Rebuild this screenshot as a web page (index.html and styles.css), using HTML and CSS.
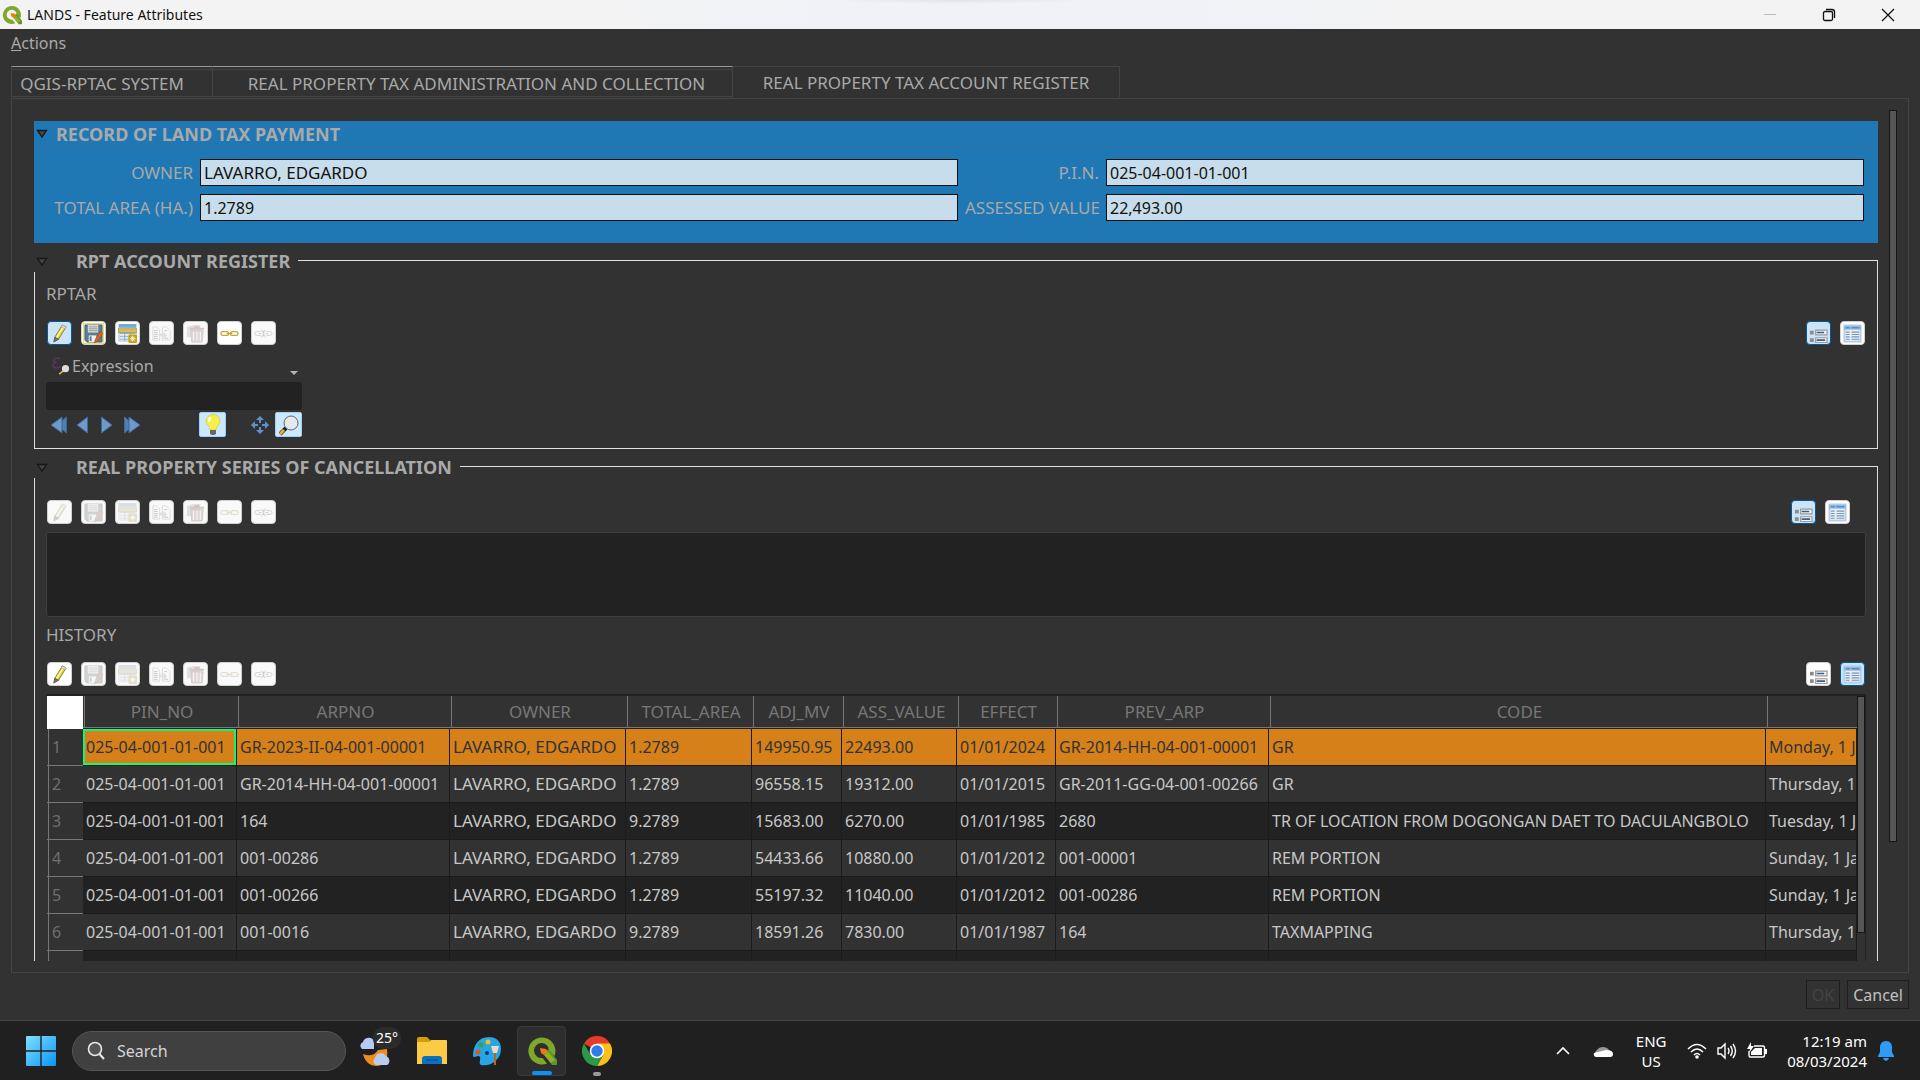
FILE: index.html
```
<!DOCTYPE html>
<html lang="en">
<head>
    <meta charset="UTF-8">
    <meta name="viewport" content="width=device-width, initial-scale=1.0">
    <title>LANDS - Feature Attributes</title>
    <link rel="stylesheet" href="styles.css">
</head>
<body>
    <!-- Icon set -->
    <svg class="sprite" aria-hidden="true">
        <symbol id="i-qgis" viewBox="0 0 30 30">
            <path d="M15 1.500A13.500 13.500 0 1 0 20 27.500L15.500 22A7.500 7.500 0 1 1 22 14.500L27.500 20A13.500 13.500 0 0 0 15 1.500Z" fill="#7fa82b"/>
            <path d="M16 17L22 13L30 24V29H25Z" fill="#589632"/>
            <path d="M13 12L19 13L21 16L17 19L14 17Z" fill="#ee7913"/>
            <path d="M17 19L21 16L28 24L24 27Z" fill="#93b023"/>
        </symbol>
        <symbol id="i-pencil" viewBox="0 0 20 20">
            <path d="M13 1L17 3L9 16L5 14Z" fill="#e0cf48" stroke="#8d8130"/>
            <path d="M14 3L6.500 15" stroke="#fff6a0" stroke-width="1.500"/>
            <path d="M13 1L17 3L16 5L12 3Z" fill="#ddd" stroke="#999" stroke-width=".5"/>
            <path d="M5 14L9 16L4 19Z" fill="#777" stroke="#555"/>
        </symbol>
        <symbol id="i-save" viewBox="0 0 20 20">
            <path d="M1 1H19V19H3L1 17Z" fill="#5a7d95" stroke="#47606f"/>
            <path d="M4 1H15V9H4Z" fill="#d9d9d9"/>
            <path d="M5 3H14M5 5H14M5 7H14" stroke="#999"/>
            <path d="M5 12H13V19H5Z" fill="#f0f0f0"/>
            <path d="M6 13H8V18H6Z" fill="#5a7d95"/>
            <path d="M17 8L20 10L14 18L11 20L12 16Z" fill="#e85f28" stroke="#9d4b16" stroke-width=".7"/>
        </symbol>
        <symbol id="i-add" viewBox="0 0 20 20">
            <path d="M1 0H19V18H1Z" fill="#e4eef8" stroke="#a8c4df"/>
            <path d="M1 0H19V4H1Z" fill="#78a9d4"/>
            <path d="M2 10H18M2 13H18M2 16H18M7 9V18M13 9V18" stroke="#8aaed2"/>
            <path d="M0 5H20V9H0Z" fill="#d8bd57" stroke="#9e862e" stroke-width=".7"/>
            <rect x="11" y="11" width="9" height="9" rx="1" fill="#c9a30c"/>
            <path d="M15.500 12.500V18.500M12.500 15.500H18.500M13.500 13.500L17.500 17.500M17.500 13.500L13.500 17.500" stroke="#fffbe0" stroke-width="1"/>
        </symbol>
        <symbol id="i-copy" viewBox="0 0 20 20">
            <path d="M1 3H5L8 6V17H1ZM11 3H15L19 7V17H11Z" fill="#fff" stroke="#999"/>
            <path d="M2 7H6M2 9H6M2 11H6M2 13H6M2 15H6M13 7H16M13 15H17" stroke="#555"/>
            <path d="M7 10H12V8L16 12L12 16V13H7Z" fill="#a3ae93"/>
        </symbol>
        <symbol id="i-trash" viewBox="0 0 20 20">
            <path d="M1 3L8 1H15V5L11 14H1Z" fill="#c4a3a3"/>
            <path d="M4 5H19M9 3H14" stroke="#a44" stroke-width="2"/>
            <path d="M5 7H18L17 19H6Z" fill="#c67b7b" stroke="#a55"/>
            <path d="M8 8V18M11.500 8V18M15 8V18" stroke="#fff"/>
        </symbol>
        <symbol id="i-link" viewBox="0 0 20 20">
            <g fill="none" stroke="#c7a52b" stroke-width="1.300">
                <rect x="1" y="8" width="8" height="4" rx="2"/>
                <rect x="11" y="8" width="8" height="4" rx="2"/>
                <path d="M7 10H13" stroke-width="1.500"/>
            </g>
        </symbol>
        <symbol id="i-unlink" viewBox="0 0 20 20">
            <path d="M7 8H3A2 2 0 0 0 3 12H7M13 8H17A2 2 0 0 1 17 12H13M5 10H8M12 10H15M8 6L12 14M12 6L8 14M10 7V13" fill="none" stroke="#777"/>
        </symbol>
        <symbol id="i-form" viewBox="0 0 20 20">
            <path d="M1 7H5V11H1ZM1 15H5V19H1Z" fill="#8d8d86"/>
            <path d="M7 6.500H19V11.500H7ZM7 14.500H19V19.500H7Z" fill="#f5f5f5" stroke="#999" stroke-width="1.200"/>
            <path d="M8 9H16M8 17H17" stroke="#365f92" stroke-width="1.700"/>
        </symbol>
        <symbol id="i-table" viewBox="0 0 20 20">
            <path d="M1.500 1.500H18.500V18.500H1.500Z" fill="#eee" stroke="#b7cde6" stroke-width="2"/>
            <path d="M1 2H19V6H1Z" fill="#8fbbe3"/>
            <path d="M3 4H7M9 4H17" stroke="#3b76b4"/>
            <path d="M3 8.500H7M9 8.500H17M3 11H7M9 11H17M3 13.500H7M9 13.500H17M3 16H7M9 16H17" stroke="#6d97c9" stroke-width="1.200"/>
        </symbol>
        <symbol id="i-prev" viewBox="0 0 12 18">
            <path d="M11.500 1V17L1 9Z" fill="#6c9acb" stroke="#3f6897"/>
        </symbol>
        <symbol id="i-first" viewBox="0 0 18 18">
            <path d="M16.500 1V17L7 9Z" fill="#4f7eb3" stroke="#3f6897"/>
            <path d="M12 1V17L1 9Z" fill="#6c9acb" stroke="#3f6897"/>
        </symbol>
    </svg>

    <header class="titlebar">
        <svg class="app-icon"><use href="#i-qgis"/></svg>
        <span class="window-title">LANDS - Feature Attributes</span>
        <div class="window-buttons">
            <button type="button" aria-label="Minimize"><svg viewBox="0 0 14 14"><path d="M1 6.500H13" stroke="#bbb"/></svg></button>
            <button type="button" aria-label="Restore"><svg viewBox="0 0 14 14"><path d="M4 1.500H10Q12.500 1.500 12.500 4V10" fill="none" stroke="#111" stroke-width="1.300"/><rect x="1.500" y="3.500" width="9" height="9" rx="1.500" fill="none" stroke="#111" stroke-width="1.300"/></svg></button>
            <button type="button" aria-label="Close"><svg viewBox="0 0 14 14"><path d="M1 1L13 13M13 1L1 13" stroke="#111" stroke-width="1.300"/></svg></button>
        </div>
    </header>

    <nav class="menubar">
        <button type="button"><u>A</u>ctions</button>
    </nav>

    <div class="tabs" role="tablist">
        <button type="button" role="tab" class="tab tab-first">QGIS-RPTAC SYSTEM</button>
        <button type="button" role="tab" class="tab tab-wide">REAL PROPERTY TAX ADMINISTRATION AND COLLECTION</button>
        <button type="button" role="tab" class="tab active" aria-selected="true">REAL PROPERTY TAX ACCOUNT REGISTER</button>
    </div>

    <main class="pane">
        <div class="content">
            <section class="record">
                <h2><svg class="arrow" viewBox="0 0 12 10"><path d="M1.500 1.500H10.500L6 8Z"/></svg>RECORD OF LAND TAX PAYMENT</h2>
                <form class="record-form">
                    <label for="owner">OWNER</label>
                    <input type="text" id="owner" class="name" value="LAVARRO, EDGARDO">
                    <label for="pin">P.I.N.</label>
                    <input type="text" id="pin" value="025-04-001-01-001">
                    <label for="area">TOTAL AREA (HA.)</label>
                    <input type="text" id="area" value="1.2789">
                    <label for="assessed">ASSESSED VALUE</label>
                    <input type="text" id="assessed" value="22,493.00">
                </form>
            </section>

            <section class="group">
                <div class="group-head">
                    <svg class="arrow" viewBox="0 0 12 10"><path d="M1.500 1.500H10.500L6 8Z"/></svg>
                    <h2>RPT ACCOUNT REGISTER</h2>
                    <span class="group-line"></span>
                </div>
                <div class="group-body">
                    <h3>RPTAR</h3>
                    <div class="toolbar">
                        <button type="button" class="tool checked" aria-label="Toggle editing"><svg><use href="#i-pencil"/></svg></button>
                        <button type="button" class="tool save-on" aria-label="Save edits"><svg><use href="#i-save"/></svg></button>
                        <button type="button" class="tool" aria-label="Add feature"><svg><use href="#i-add"/></svg></button>
                        <button type="button" class="tool" aria-label="Duplicate" disabled><svg><use href="#i-copy"/></svg></button>
                        <button type="button" class="tool" aria-label="Delete" disabled><svg><use href="#i-trash"/></svg></button>
                        <button type="button" class="tool" aria-label="Link"><svg><use href="#i-link"/></svg></button>
                        <button type="button" class="tool" aria-label="Unlink" disabled><svg><use href="#i-unlink"/></svg></button>
                        <span class="spacer"></span>
                        <button type="button" class="tool checked" aria-label="Form view"><svg><use href="#i-form"/></svg></button>
                        <button type="button" class="tool" aria-label="Table view"><svg><use href="#i-table"/></svg></button>
                    </div>
                    <div class="browser">
                        <button type="button" class="expression">
                            <svg class="epsilon" viewBox="0 0 20 20">
                                <path d="M9 2C5 0 1 2 2 4.500C2 6 4 6 5 6C2 6 1 8 1 9.500C2 13 6 13 9 11" fill="none" stroke="#5e3568" stroke-width="1.600"/>
                                <path d="M8 19L13 15" stroke="#d5ad48" stroke-width="2"/>
                                <circle cx="15" cy="13" r="4" fill="#ddd"/>
                            </svg>
                            Expression
                            <svg class="caret" viewBox="0 0 8 4"><path d="M0 0H8L4 4Z" fill="#b5b5b5"/></svg>
                        </button>
                        <input type="text" class="filter" aria-label="Filter">
                        <div class="nav">
                            <button type="button" aria-label="First"><svg class="wide"><use href="#i-first"/></svg></button>
                            <button type="button" aria-label="Previous"><svg><use href="#i-prev"/></svg></button>
                            <button type="button" aria-label="Next"><svg class="flip"><use href="#i-prev"/></svg></button>
                            <button type="button" aria-label="Last"><svg class="wide flip"><use href="#i-first"/></svg></button>
                            <span class="spacer"></span>
                            <button type="button" class="lit" aria-label="Highlight feature">
                                <svg viewBox="0 0 20 22"><path d="M7 16C7 12 3 11 3 7A7 6.500 0 0 1 17 7C17 11 13 12 13 16Z" fill="#f5f04c" stroke="#cfc843" stroke-width=".7"/><path d="M7 3L6 8" stroke="#fff" stroke-width="2"/><path d="M7 16H13V20L11 21H9L7 20Z" fill="#666"/></svg>
                            </button>
                            <button type="button" class="pan" aria-label="Pan to feature">
                                <svg viewBox="0 0 18 18"><path d="M9 0L13 4H10V7H8V4H5ZM9 18L13 14H10V11H8V14H5ZM0 9L4 5V8H7V10H4V13ZM18 9L14 5V8H11V10H14V13Z" fill="#5f92cc"/></svg>
                            </button>
                            <button type="button" class="lit" aria-label="Zoom to feature">
                                <svg viewBox="0 0 20 22"><path d="M7 14L1 20" stroke="#222" stroke-width="4"/><path d="M5 16L1 20" stroke="#e7b63e" stroke-width="3"/><circle cx="12" cy="9" r="7" fill="#e5e9ec" stroke="#666"/></svg>
                            </button>
                        </div>
                    </div>
                </div>
            </section>

            <section class="group group-last">
                <div class="group-head">
                    <svg class="arrow" viewBox="0 0 12 10"><path d="M1.500 1.500H10.500L6 8Z"/></svg>
                    <h2>REAL PROPERTY SERIES OF CANCELLATION</h2>
                    <span class="group-line"></span>
                </div>
                <div class="group-body">
                    <div class="toolbar toolbar-inset">
                        <button type="button" class="tool" aria-label="Toggle editing" disabled><svg><use href="#i-pencil"/></svg></button>
                        <button type="button" class="tool" aria-label="Save edits" disabled><svg><use href="#i-save"/></svg></button>
                        <button type="button" class="tool" aria-label="Add feature" disabled><svg><use href="#i-add"/></svg></button>
                        <button type="button" class="tool" aria-label="Duplicate" disabled><svg><use href="#i-copy"/></svg></button>
                        <button type="button" class="tool" aria-label="Delete" disabled><svg><use href="#i-trash"/></svg></button>
                        <button type="button" class="tool" aria-label="Link" disabled><svg><use href="#i-link"/></svg></button>
                        <button type="button" class="tool" aria-label="Unlink" disabled><svg><use href="#i-unlink"/></svg></button>
                        <span class="spacer"></span>
                        <button type="button" class="tool checked" aria-label="Form view"><svg><use href="#i-form"/></svg></button>
                        <button type="button" class="tool" aria-label="Table view"><svg><use href="#i-table"/></svg></button>
                    </div>
                    <div class="empty-view"></div>
                    <h3>HISTORY</h3>
                    <div class="toolbar">
                        <button type="button" class="tool" aria-label="Toggle editing"><svg><use href="#i-pencil"/></svg></button>
                        <button type="button" class="tool" aria-label="Save edits" disabled><svg><use href="#i-save"/></svg></button>
                        <button type="button" class="tool" aria-label="Add feature" disabled><svg><use href="#i-add"/></svg></button>
                        <button type="button" class="tool" aria-label="Duplicate" disabled><svg><use href="#i-copy"/></svg></button>
                        <button type="button" class="tool" aria-label="Delete" disabled><svg><use href="#i-trash"/></svg></button>
                        <button type="button" class="tool" aria-label="Link" disabled><svg><use href="#i-link"/></svg></button>
                        <button type="button" class="tool" aria-label="Unlink" disabled><svg><use href="#i-unlink"/></svg></button>
                        <span class="spacer"></span>
                        <button type="button" class="tool" aria-label="Form view"><svg><use href="#i-form"/></svg></button>
                        <button type="button" class="tool checked" aria-label="Table view"><svg><use href="#i-table"/></svg></button>
                    </div>
                    <div class="table-view">
                        <div class="table-scrollport">
                            <table>
                                <colgroup>
                                    <col class="c-num"><col class="c-pin"><col class="c-arp"><col class="c-owner"><col class="c-area"><col class="c-mv"><col class="c-ass"><col class="c-effect"><col class="c-arp"><col><col class="c-date">
                                </colgroup>
                                <thead>
                                    <tr><td class="corner"></td><th>PIN_NO</th><th>ARPNO</th><th>OWNER</th><th>TOTAL_AREA</th><th>ADJ_MV</th><th>ASS_VALUE</th><th>EFFECT</th><th>PREV_ARP</th><th>CODE</th><th></th></tr>
                                </thead>
                                <tbody>
                                    <tr class="selected"><th>1</th><td class="current">025-04-001-01-001</td><td>GR-2023-II-04-001-00001</td><td class="name">LAVARRO, EDGARDO</td><td>1.2789</td><td>149950.95</td><td>22493.00</td><td>01/01/2024</td><td>GR-2014-HH-04-001-00001</td><td>GR</td><td>Monday, 1 January</td></tr>
                                    <tr><th>2</th><td>025-04-001-01-001</td><td>GR-2014-HH-04-001-00001</td><td class="name">LAVARRO, EDGARDO</td><td>1.2789</td><td>96558.15</td><td>19312.00</td><td>01/01/2015</td><td>GR-2011-GG-04-001-00266</td><td>GR</td><td>Thursday, 1 January</td></tr>
                                    <tr><th>3</th><td>025-04-001-01-001</td><td>164</td><td class="name">LAVARRO, EDGARDO</td><td>9.2789</td><td>15683.00</td><td>6270.00</td><td>01/01/1985</td><td>2680</td><td>TR OF LOCATION FROM DOGONGAN DAET TO DACULANGBOLO</td><td>Tuesday, 1 January</td></tr>
                                    <tr><th>4</th><td>025-04-001-01-001</td><td>001-00286</td><td class="name">LAVARRO, EDGARDO</td><td>1.2789</td><td>54433.66</td><td>10880.00</td><td>01/01/2012</td><td>001-00001</td><td>REM PORTION</td><td>Sunday, 1 January</td></tr>
                                    <tr><th>5</th><td>025-04-001-01-001</td><td>001-00266</td><td class="name">LAVARRO, EDGARDO</td><td>1.2789</td><td>55197.32</td><td>11040.00</td><td>01/01/2012</td><td>001-00286</td><td>REM PORTION</td><td>Sunday, 1 January</td></tr>
                                    <tr><th>6</th><td>025-04-001-01-001</td><td>001-0016</td><td class="name">LAVARRO, EDGARDO</td><td>9.2789</td><td>18591.26</td><td>7830.00</td><td>01/01/1987</td><td>164</td><td>TAXMAPPING</td><td>Thursday, 1 January</td></tr>
                                    <tr><th></th><td></td><td></td><td></td><td></td><td></td><td></td><td></td><td></td><td></td><td></td></tr>
                                </tbody>
                            </table>
                        </div>
                        <div class="scrollbar table-scroll"><span></span></div>
                    </div>
                </div>
            </section>
        </div>
        <div class="scrollbar page-scroll"><span></span></div>
    </main>

    <div class="dialog-buttons">
        <button type="button" disabled>OK</button>
        <button type="button">Cancel</button>
    </div>

    <footer class="taskbar">
        <button type="button" class="start" aria-label="Start">
            <svg viewBox="0 0 30 30">
                <defs><linearGradient id="win" x2="1" y2="1"><stop offset="0" stop-color="#7fe0ff"/><stop offset="1" stop-color="#0a93f5"/></linearGradient></defs>
                <path d="M0 1Q0 0 1 0H14.300V14.300H0ZM15.700 0H29Q30 0 30 1V14.300H15.700ZM0 15.700H14.300V30H1Q0 30 0 29ZM15.700 15.700H30V29Q30 30 29 30H15.700Z" fill="url(#win)"/>
            </svg>
        </button>
        <label class="search">
            <svg viewBox="0 0 20 20"><circle cx="9" cy="8" r="6.500" fill="#555" stroke="#e8e8e8" stroke-width="1.600"/><path d="M13.500 13L18 18" stroke="#e8e8e8" stroke-width="2"/></svg>
            <input type="text" placeholder="Search">
        </label>
        <button type="button" class="app weather" aria-label="Weather">
            <svg viewBox="0 0 42 36">
                <path d="M3 16A4 4 0 0 1 4 9A6 6 0 0 1 15 8V16Z" fill="#b5cbf3"/>
                <path d="M4 21Q14 25 19 17L28 16Q30 32 18 33Q7 33 4 21Z" fill="#f08c1e"/>
                <path d="M17 32A4 4 0 0 1 16 25A6 6 0 0 1 27 23A5 5 0 0 1 28 32Z" fill="#b9cdf2"/>
            </svg>
            <span>25°</span>
        </button>
        <button type="button" class="app" aria-label="File Explorer">
            <svg viewBox="0 0 30 30"><path d="M0 3Q0 1 2 1H10L13 4V8H0Z" fill="#d99a08"/><path d="M0 6H12L14 4H29Q30 4 30 5V28H0Z" fill="#fccb45"/><path d="M5 28V23Q5 20 8 20H22Q25 20 25 23V28Z" fill="#0c6fc4"/><path d="M9 24H21" stroke="#064b88"/></svg>
        </button>
        <button type="button" class="app" aria-label="Paint">
            <svg viewBox="0 0 30 30"><path d="M17 1C6 1 1 10 1 20C2 23 6 18 8 21C9 24 6 27 9 29C18 31 29 24 29 13C29 5 24 1 17 1Z" fill="#27a5e6"/><circle cx="9" cy="9" r="2.500" fill="#3aa33d"/><circle cx="16" cy="6" r="2.500" fill="#f7bd1a"/><circle cx="6" cy="16" r="2.500" fill="#e2562d"/><circle cx="15" cy="17" r="2" fill="#133c58"/><path d="M19 10H27L25 17H21Z" fill="#e9dcc4"/><path d="M23 17V29" stroke="#b9651f" stroke-width="2"/></svg>
        </button>
        <button type="button" class="app running current-app" aria-label="QGIS">
            <svg><use href="#i-qgis"/></svg>
        </button>
        <button type="button" class="app running" aria-label="Chrome">
            <svg viewBox="0 0 30 30"><path d="M15 15L2 7.500A15 15 0 0 1 28 7.500Z" fill="#e33b2e"/><path d="M15 15V7.500H28A15 15 0 0 1 15 30L21.500 18.500Z" fill="#fbc116"/><path d="M2 7.500L8.500 18.500L21.500 18.500L15 30A15 15 0 0 1 2 7.500Z" fill="#2a9a47"/><circle cx="15" cy="15" r="7.300" fill="#fff"/><circle cx="15" cy="15" r="5.700" fill="#2f7de9"/></svg>
        </button>
        <div class="tray">
            <svg class="chevron" viewBox="0 0 14 9"><path d="M1 8L7 2L13 8" fill="none" stroke="#fff" stroke-width="1.600"/></svg>
            <svg class="cloud" viewBox="0 0 20 14"><path d="M4 13A4 4 0 0 1 4 6A7 6 0 0 1 16 6A4 4 0 0 1 17 13Z" fill="#999"/><path d="M3 13Q0 12 1 9L13 6Q20 6 20 10Q20 13 17 13Z" fill="#fff"/></svg>
            <div class="lang">ENG<br>US</div>
            <div class="status">
                <svg viewBox="0 0 20 18"><path d="M1 7Q10-2 19 7M4 10Q10 4 16 10M7 13Q10 10 13 13" fill="none" stroke="#fff" stroke-width="1.500"/><circle cx="10" cy="15" r="1.800" fill="#fff"/></svg>
                <svg viewBox="0 0 20 18"><path d="M1 6H4L8 2V16L4 12H1ZM11 6Q13 9 11 12M13.500 4Q17 9 13.500 14M16 2Q21 9 16 16" fill="none" stroke="#fff" stroke-width="1.400"/></svg>
                <svg viewBox="0 0 20 18"><path d="M7 4H16Q17.500 4 17.500 6V13Q17.500 15 16 15H3Q2 15 2 13V9" fill="none" stroke="#fff" stroke-width="1.400"/><path d="M8 6H15V13H4V10Z" fill="#fff"/><path d="M18 7H20V12H18ZM4 0L0 7H3L2 11L7 4H4Z" fill="#fff"/></svg>
            </div>
            <div class="clock">12:19 am<br>08/03/2024</div>
            <svg class="bell" viewBox="0 0 16 20"><path d="M8 0C4 0 2 3 2 6V11L0 15V16H16V15L14 11V6C14 3 12 0 8 0ZM5 17H11Q10 20 8 20Q6 20 5 17Z" fill="#2e9bf5"/></svg>
        </div>
    </footer>
</body>
</html>
```
FILE: styles.css
```
* {
    box-sizing: border-box;
}

body {
    margin: 0;
    height: 100vh;
    display: flex;
    flex-direction: column;
    overflow: hidden;
    background: #323232;
    color: #a9a9a9;
    font-family: "Noto Sans", "Open Sans", sans-serif;
    font-size: 16px;
    line-height: 20px;
}

button,
input {
    font: inherit;
    color: inherit;
    margin: 0;
    padding: 0;
    border: none;
    background: none;
}

svg {
    display: block;
    flex: none;
}

h2,
h3 {
    margin: 0;
    font-size: 18px;
    white-space: nowrap;
}

h3 {
    font-size: 17px;
    font-weight: normal;
}

.name {
    font-size: 17px;
}

.sprite {
    position: absolute;
    width: 0;
    height: 0;
}

.spacer {
    flex: 1;
}

/* Title bar and menu */

.titlebar {
    display: flex;
    align-items: center;
    height: 29px;
    padding-left: 2px;
    background: radial-gradient(ellipse 130px 4px at 50% 0, #e2e3e8, #e2e3e800), linear-gradient(90deg, #f3f3f3 30%, #f0f2f8 45%, #f0f2f8 60%, #f3f3f3 75%);
    color: #111;
    font-size: 14px;
}

.app-icon {
    width: 20px;
    height: 20px;
    margin-right: 5px;
}

.window-buttons {
    display: flex;
    margin-left: auto;
    margin-right: 3px;
}

.window-buttons button {
    display: flex;
    justify-content: center;
    width: 59px;
}

.window-buttons svg {
    width: 14px;
    height: 14px;
}

.menubar {
    padding: 4px 11px 13px;
}

.menubar button {
    display: block;
}

/* Tabs */

.tabs {
    display: flex;
    align-items: flex-end;
    padding: 0 11px;
    font-size: 17px;
}

.tab {
    height: 31px;
    border: 1px solid #444;
    border-left: none;
    border-top: 1px solid #999;
    box-shadow: inset 0 2px #323232, inset 0 3px #444;
    padding-top: 4px;
    white-space: nowrap;
}

.tab-first {
    width: 202px;
    border-left: 1px solid #444;
    padding-right: 20px;
}

.tab-wide {
    width: 520px;
    padding-left: 8px;
}

.tab.active {
    width: 387px;
    border-top-color: #444;
    border-bottom: none;
    box-shadow: none;
    padding: 2px 0 0;
}

.pane {
    flex: 1;
    min-height: 0;
    display: flex;
    gap: 11px;
    margin: 1px 11px 0;
    padding: 11px 11px 11px 22px;
    border: 1px solid #444;
}

.content {
    flex: 1;
    min-width: 0;
    display: flex;
    flex-direction: column;
    gap: 6px;
    padding-top: 11px;
    overflow: hidden;
}

.scrollbar {
    width: 8px;
}

.scrollbar span {
    display: block;
    border: 1px solid #161616;
    background: #555;
}

.page-scroll span {
    height: 86%;
}

/* Land tax record */

.arrow {
    width: 12px;
    height: 10px;
}

.arrow path {
    fill: #444;
    stroke: #161616;
    stroke-width: 1.3px;
}

.record {
    background: #1f78b4;
    padding-bottom: 22px;
}

.record h2 {
    display: flex;
    align-items: center;
    gap: 8px;
    height: 26px;
    padding-left: 2px;
    border-bottom: 1px solid #2f74a8;
}

.record-form {
    display: grid;
    grid-template-columns: 147px 1fr 134px 1fr;
    gap: 8px 7px;
    padding: 12px 14px 0 12px;
}

.record-form label {
    text-align: right;
    font-size: 17px;
    line-height: 27px;
    white-space: nowrap;
}

.record-form input {
    min-width: 0;
    height: 27px;
    padding: 0 3px;
    border: 1px solid #111;
    background: #c7ddeb;
    color: #111;
}

/* Collapsible groups */

.group-head {
    display: flex;
    align-items: flex-start;
    height: 23px;
}

.group-head .arrow {
    margin: 8px 28px 0 2px;
}

.group-head h2 {
    line-height: 24px;
}

.group-line {
    flex: 1;
    height: 12px;
    margin: 11px 0 0 8px;
    border-top: 1px solid #e0e0e0;
    border-right: 1px solid #e0e0e0;
}

.group-body {
    padding: 12px 11px 11px;
    border: 1px solid #e0e0e0;
    border-top: none;
}

.group-last {
    flex: 1;
    min-height: 0;
    display: flex;
    flex-direction: column;
}

.group-last .group-body {
    flex: 1;
    min-height: 0;
    display: flex;
    flex-direction: column;
    padding: 22px 11px 0;
    border-bottom: none;
}

.toolbar {
    display: flex;
    gap: 9px;
    padding: 0 1px;
}

h3 + .toolbar {
    padding-top: 17px;
}

.toolbar-inset {
    padding-right: 16px;
}

.tool {
    display: flex;
    align-items: center;
    justify-content: center;
    width: 25px;
    height: 24px;
    border: 1px solid #d0d0d0;
    border-radius: 4px;
    background: #fff;
}

.tool svg {
    width: 19px;
    height: 19px;
}

.tool.checked {
    border-color: #005a9e;
    background: #cce4f7;
}

.tool.save-on svg {
    outline: 1px solid #e6e65a;
}

.tool:disabled {
    background: #f9f9f9;
}

.tool:disabled svg {
    opacity: 0.3;
    filter: saturate(0.4);
}

/* Feature browser */

.browser {
    width: 256px;
    padding-top: 5px;
}

.expression {
    display: flex;
    align-items: center;
    gap: 2px;
    width: 100%;
    height: 32px;
    padding: 0 4px 0 6px;
}

.epsilon {
    width: 18px;
    height: 20px;
}

.caret {
    width: 8px;
    height: 4px;
    margin: 14px 0 0 auto;
}

.filter {
    display: block;
    width: 100%;
    height: 28px;
    border-radius: 3px;
    background: #222;
}

.nav {
    display: flex;
    align-items: center;
    padding: 2px 0 0 3px;
}

.nav button {
    display: flex;
    justify-content: center;
    width: 25px;
}

.nav svg {
    width: 12px;
    height: 18px;
}

.nav .wide {
    width: 18px;
}

.nav button:first-child {
    width: 20px;
}

.flip {
    transform: scaleX(-1);
}

.nav .lit {
    width: 27px;
    height: 25px;
    align-items: center;
    border: 1px solid #99d1ff;
    border-radius: 2px;
    background: #cce8ff;
}

.nav .lit svg {
    width: 20px;
    height: 22px;
}

.nav .pan {
    margin: 0 3px 0 21px;
}

.nav .pan svg {
    width: 18px;
}

/* History */

.empty-view {
    flex: none;
    height: 85px;
    margin: 8px 0;
    border: 1px solid #3f3f3f;
    border-radius: 3px;
    background: #222;
}

.table-view {
    flex: 1;
    min-height: 0;
    display: flex;
    margin-top: 8px;
    padding-left: 1px;
    border-top: 2px solid #222;
    border-right: 1px solid #222;
    overflow: hidden;
}

.table-scrollport {
    flex: 1;
    min-width: 0;
}

table {
    width: 100%;
    table-layout: fixed;
    border-collapse: separate;
    border-spacing: 0;
}

.c-num { width: 36px; }
.c-pin { width: 154px; }
.c-arp { width: 213px; }
.c-owner { width: 176px; }
.c-area { width: 126px; }
.c-mv { width: 90px; }
.c-ass { width: 115px; }
.c-effect { width: 99px; }
.c-date { width: 91px; }

th,
td {
    padding: 0;
    font-weight: normal;
    white-space: nowrap;
    overflow: hidden;
}

thead th {
    height: 33px;
    padding-left: 4px;
    border-bottom: 1px solid #222;
    background: linear-gradient(#777, #777) 1px 0 / 1px 100% no-repeat, linear-gradient(#777, #777) 0 100% / 100% 1px no-repeat;
    color: #777;
    font-size: 17px;
}

thead .corner {
    background: #fff;
}

tbody th {
    height: 37px;
    padding-left: 5px;
    border-bottom: 1px solid #777;
    background: linear-gradient(#777, #777) 1px 0 / 1px 100% no-repeat;
    color: #6f6f6f;
    text-align: left;
}

tbody td {
    padding-left: 3px;
    border-right: 1px solid #1b1b1b;
    border-bottom: 1px solid #1b1b1b;
    color: #c8c8c8;
}

tbody tr:nth-child(odd) td {
    background: #222;
}

tbody .selected td {
    background: #d6801a !important;
    color: #323232;
}

tbody .current {
    box-shadow: inset 0 0 0 2px #12f67c;
}

.table-scroll span {
    height: 237px;
}

/* Dialog buttons */

.dialog-buttons {
    display: flex;
    justify-content: flex-end;
    gap: 7px;
    padding: 7px 11px 11px;
    border-bottom: 1px solid #444;
}

.dialog-buttons button {
    height: 29px;
    padding: 0 5px;
    border: 1px solid #1e1e1e;
    color: #c0c0c0;
}

.dialog-buttons button:disabled {
    color: #444;
}

/* Taskbar */

.taskbar {
    display: flex;
    align-items: center;
    height: 59px;
    padding: 0 26px;
    background: #202020;
    color: #fff;
    font-size: 15px;
}

.start svg {
    width: 30px;
    height: 30px;
}

.search {
    display: flex;
    align-items: center;
    gap: 11px;
    width: 274px;
    height: 40px;
    margin: 0 13px 0 16px;
    padding: 0 13px;
    border: 1px solid #555;
    border-radius: 20px;
    background: #404040;
}

.search svg {
    width: 20px;
    height: 20px;
}

.search input {
    min-width: 0;
    flex: 1;
    font-size: 16px;
}

.search input::placeholder {
    color: #d5d5d5;
    opacity: 1;
}

.app {
    position: relative;
    display: flex;
    align-items: center;
    justify-content: center;
    width: 49px;
    height: 50px;
    margin-right: 6px;
    border-radius: 4px;
}

.app svg {
    width: 30px;
    height: 30px;
}

.app.weather {
    width: 42px;
}

.weather svg {
    width: 42px;
    height: 36px;
}

.weather span {
    position: absolute;
    top: 1px;
    right: 0;
    width: 28px;
    border-radius: 10px;
    background: #2b2b2b;
    font-size: 14px;
    line-height: 22px;
}

.current-app {
    background: #2e2e2e;
    border: 1px solid #3a3a3a;
}

.running::after {
    content: "";
    position: absolute;
    bottom: 0;
    width: 8px;
    height: 4px;
    border-radius: 2px;
    background: #9a9a9a;
}

.current-app::after {
    width: 20px;
    background: #0a91f5;
}

.tray {
    display: flex;
    align-items: center;
    margin-left: auto;
}

.chevron {
    width: 14px;
    height: 9px;
    margin-right: 23px;
}

.cloud {
    width: 20px;
    height: 14px;
    margin-right: 22px;
}

.lang {
    width: 32px;
    text-align: center;
}

.status {
    display: flex;
    gap: 10px;
    margin: 0 20px 0 20px;
}

.status svg {
    width: 20px;
    height: 18px;
}

.clock {
    text-align: right;
}

.bell {
    width: 16px;
    height: 20px;
    margin: 0 0 0 11px;
}
```
